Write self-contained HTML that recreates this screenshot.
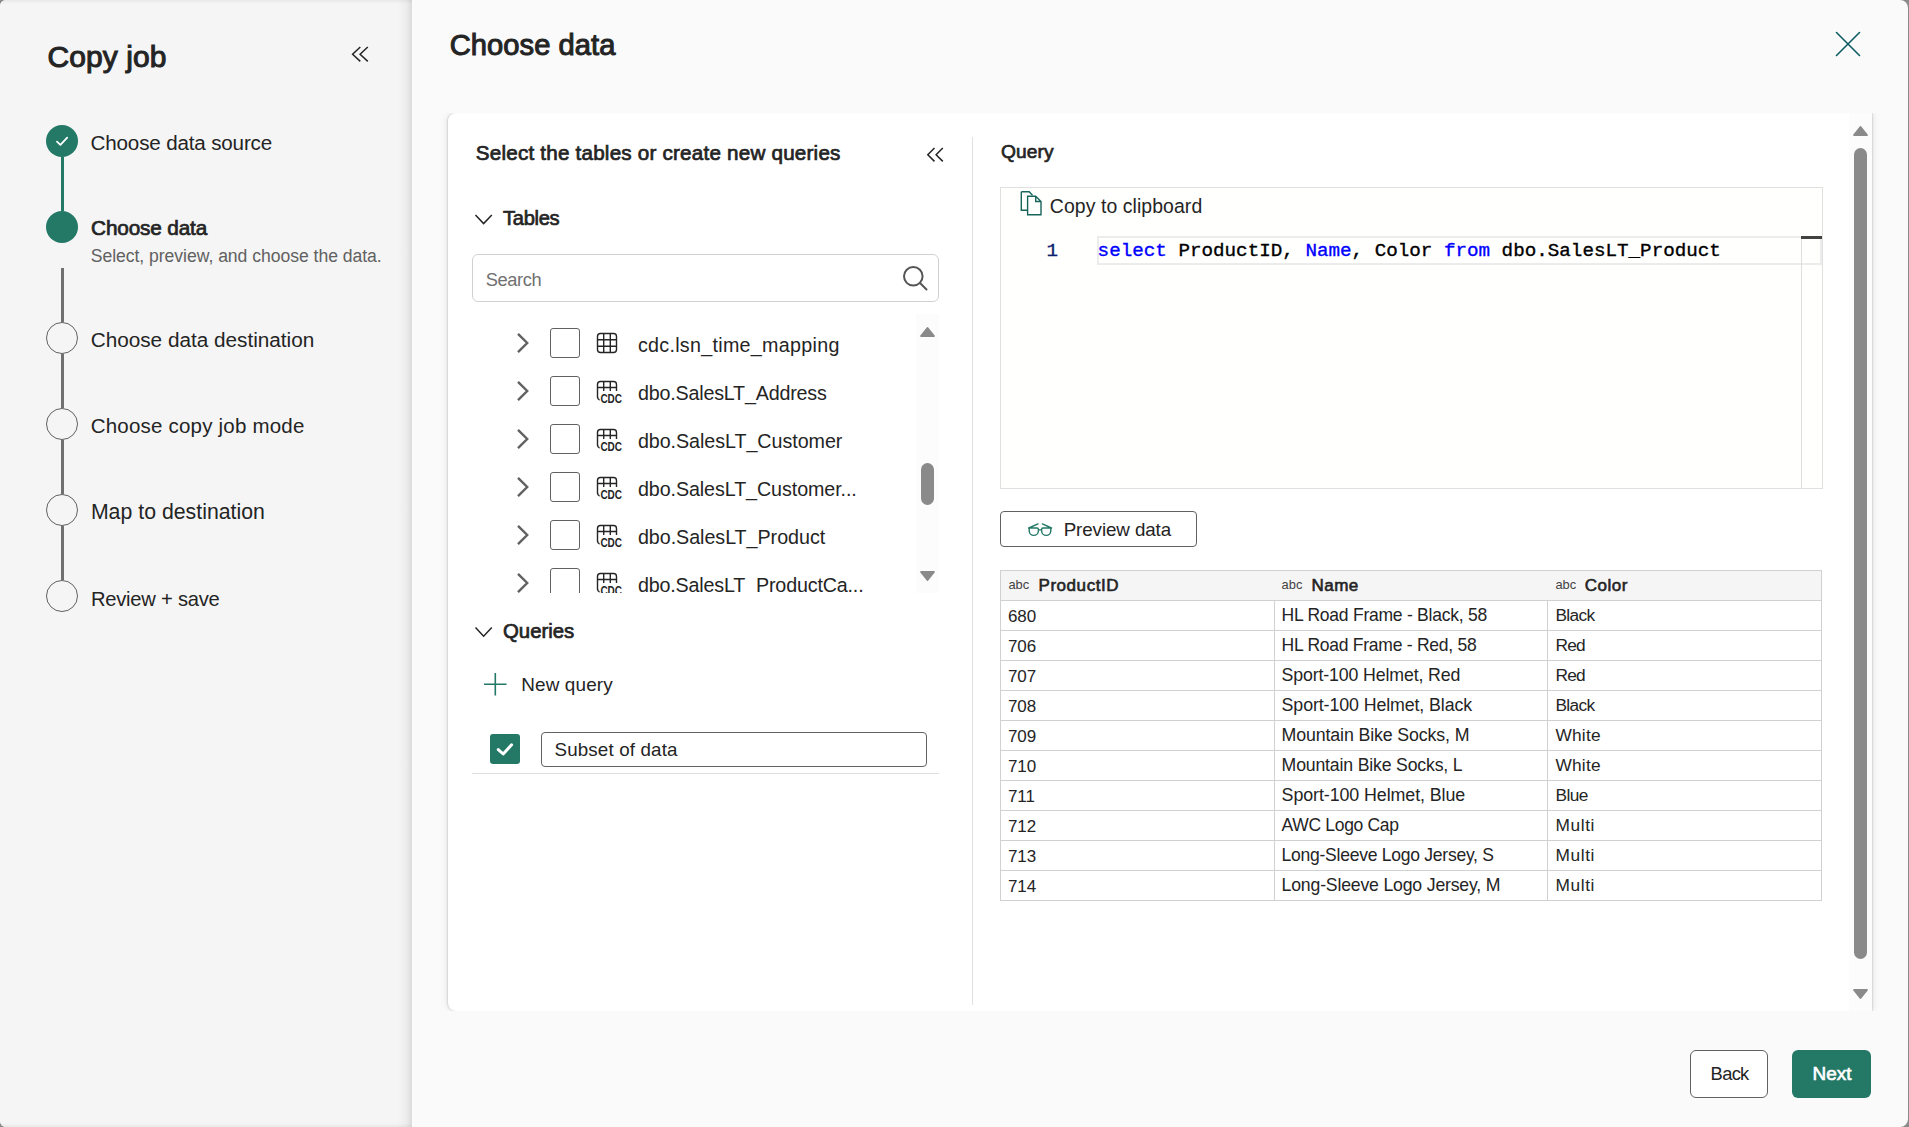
<!DOCTYPE html>
<html><head><meta charset="utf-8"><style>
html,body{margin:0;padding:0;width:1909px;height:1127px;overflow:hidden;background:#8a8a8a}
.t{position:absolute;white-space:nowrap;font-family:"Liberation Sans",sans-serif}
.m{position:absolute;white-space:pre;font-family:"Liberation Mono",monospace;-webkit-text-stroke:0.35px currentColor}
</style></head><body>
<div style="position:absolute;left:0;top:0;width:1908px;height:1127px;border-radius:6px 8px 8px 6px;overflow:hidden;background:#fafafa">
<div style="position:absolute;left:0px;top:0px;width:412px;height:1127px;background:#f5f5f5"></div>
<div style="position:absolute;left:398px;top:0px;width:14px;height:1127px;background:linear-gradient(to right,rgba(0,0,0,0),rgba(0,0,0,0.035) 60%,rgba(0,0,0,0.11))"></div>
<div style="position:absolute;left:412px;top:0px;width:1px;height:1127px;background:#fdfdfd"></div>
<div style="position:absolute;left:0px;top:0px;width:412px;height:4px;background:linear-gradient(to bottom,rgba(0,0,0,0.05),rgba(0,0,0,0))"></div>
<div style="position:absolute;left:0px;top:1123px;width:412px;height:4px;background:linear-gradient(to top,rgba(0,0,0,0.05),rgba(0,0,0,0))"></div>
<div class="t" style="left:47.62px;top:42.33px;font-size:29.97px;line-height:29.97px;letter-spacing:0.080px;color:#242424;-webkit-text-stroke:1.05px #242424;">Copy job</div>
<svg style="position:absolute;left:348px;top:44px" width="24" height="20" viewBox="0 0 24 20"><path d="M12.3 3 L4.6 10.2 L12.3 17.4 M19.8 3 L12.1 10.2 L19.8 17.4" fill="none" stroke="#242424" stroke-width="1.5"/></svg>
<div style="position:absolute;left:61px;top:157px;width:3px;height:54px;background:#247866"></div>
<div style="position:absolute;left:61px;top:268px;width:3px;height:54px;background:#707070"></div>
<div style="position:absolute;left:61px;top:354px;width:3px;height:54px;background:#707070"></div>
<div style="position:absolute;left:61px;top:440px;width:3px;height:54px;background:#707070"></div>
<div style="position:absolute;left:61px;top:526px;width:3px;height:54px;background:#707070"></div>
<div style="position:absolute;left:46px;top:125px;width:32px;height:32px;border-radius:50%;background:#247866"></div>
<svg style="position:absolute;left:46px;top:125px" width="32" height="32" viewBox="0 0 32 32"><path d="M11 16.6 L14.4 19.8 L21.2 12.6" fill="none" stroke="#fff" stroke-width="1.8" stroke-linecap="round" stroke-linejoin="round"/></svg>
<div style="position:absolute;left:46px;top:211px;width:32px;height:32px;border-radius:50%;background:#247866"></div>
<div style="position:absolute;left:46px;top:322px;width:32px;height:32px;box-sizing:border-box;border-radius:50%;border:1.2px solid #616161;background:#f5f5f5"></div>
<div style="position:absolute;left:46px;top:408px;width:32px;height:32px;box-sizing:border-box;border-radius:50%;border:1.2px solid #616161;background:#f5f5f5"></div>
<div style="position:absolute;left:46px;top:494px;width:32px;height:32px;box-sizing:border-box;border-radius:50%;border:1.2px solid #616161;background:#f5f5f5"></div>
<div style="position:absolute;left:46px;top:580px;width:32px;height:32px;box-sizing:border-box;border-radius:50%;border:1.2px solid #616161;background:#f5f5f5"></div>
<div class="t" style="left:90.50px;top:133.45px;font-size:20.62px;line-height:20.62px;letter-spacing:-0.161px;color:#242424;">Choose data source</div>
<div class="t" style="left:91.06px;top:217.65px;font-size:20.74px;line-height:20.74px;letter-spacing:-0.145px;color:#242424;-webkit-text-stroke:0.73px #242424;">Choose data</div>
<div class="t" style="left:90.70px;top:247.90px;font-size:17.60px;line-height:17.60px;letter-spacing:-0.039px;color:#616161;">Select, preview, and choose the data.</div>
<div class="t" style="left:90.70px;top:330.13px;font-size:20.76px;line-height:20.76px;letter-spacing:-0.009px;color:#242424;">Choose data destination</div>
<div class="t" style="left:90.70px;top:416.45px;font-size:20.50px;line-height:20.50px;letter-spacing:0.211px;color:#242424;">Choose copy job mode</div>
<div class="t" style="left:90.90px;top:502.19px;font-size:21.27px;line-height:21.27px;letter-spacing:0.016px;color:#242424;">Map to destination</div>
<div class="t" style="left:90.90px;top:588.64px;font-size:20.16px;line-height:20.16px;letter-spacing:-0.228px;color:#242424;">Review + save</div>
<div class="t" style="left:449.71px;top:31.12px;font-size:29.16px;line-height:29.16px;letter-spacing:0.041px;color:#242424;-webkit-text-stroke:1.02px #242424;">Choose data</div>
<svg style="position:absolute;left:1834px;top:30px" width="28" height="28" viewBox="0 0 28 28"><path d="M2.5 2.5 L25.5 25.5 M25.5 2.5 L2.5 25.5" fill="none" stroke="#0f5d64" stroke-width="1.6" stroke-linecap="round"/></svg>
<div style="position:absolute;left:448px;top:113px;width:1424px;height:898px;background:#fff;border-radius:8px 0 0 8px;box-shadow:-1px 0 1.5px rgba(0,0,0,0.10),-2px 0 7px rgba(0,0,0,0.06),1px 0 1.5px rgba(0,0,0,0.10),2px 0 7px rgba(0,0,0,0.06);clip-path:inset(0 -20px 0 -20px)"></div>
<div style="position:absolute;left:1849px;top:113px;width:23px;height:898px;background:#fcfcfc"></div>
<svg style="position:absolute;left:1852px;top:124px" width="17" height="14" viewBox="0 0 17 14"><path d="M8.5 3 L14.9 11 L2.1 11 Z" fill="#8a8a8a" stroke="#8a8a8a" stroke-width="2" stroke-linejoin="round"/></svg>
<div style="position:absolute;left:1854px;top:148px;width:13px;height:811px;border-radius:7px;background:#8a8a8a"></div>
<svg style="position:absolute;left:1852px;top:987px" width="17" height="14" viewBox="0 0 17 14"><path d="M2.1 3 L14.9 3 L8.5 11 Z" fill="#8a8a8a" stroke="#8a8a8a" stroke-width="2" stroke-linejoin="round"/></svg>
<div class="t" style="left:475.76px;top:143.42px;font-size:20.65px;line-height:20.65px;letter-spacing:0.206px;color:#242424;-webkit-text-stroke:0.72px #242424;">Select the tables or create new queries</div>
<svg style="position:absolute;left:924px;top:145px" width="22" height="20" viewBox="0 0 22 20"><path d="M10.5 3 L3.8 9.7 L10.5 16.4 M18.8 3 L12.1 9.7 L18.8 16.4" fill="none" stroke="#242424" stroke-width="1.5"/></svg>
<div style="position:absolute;left:972px;top:137px;width:1px;height:868px;background:#e0e0e0"></div>
<svg style="position:absolute;left:474px;top:211px" width="20" height="16" viewBox="0 0 20 16"><path d="M1.5 4 L9.6 12.6 L17.8 4" fill="none" stroke="#242424" stroke-width="1.5"/></svg>
<div class="t" style="left:503.05px;top:207.84px;font-size:20.15px;line-height:20.15px;letter-spacing:-0.331px;color:#242424;-webkit-text-stroke:0.71px #242424;">Tables</div>
<div style="position:absolute;left:472px;top:254px;width:467px;height:48px;box-sizing:border-box;border:1px solid #d1d1d1;border-radius:6px;background:#fff"></div>
<div class="t" style="left:485.80px;top:270.54px;font-size:18.26px;line-height:18.26px;letter-spacing:-0.391px;color:#707070;">Search</div>
<svg style="position:absolute;left:900px;top:263px" width="30" height="30" viewBox="0 0 30 30"><circle cx="13.3" cy="13.3" r="9.3" fill="none" stroke="#555" stroke-width="2"/><path d="M20 20 L26.5 26.5" stroke="#555" stroke-width="2" stroke-linecap="round"/></svg>
<div style="position:absolute;left:472px;top:314px;width:467px;height:279px;overflow:hidden">
<svg style="position:absolute;left:43px;top:17px" width="16" height="24" viewBox="0 0 16 24"><path d="M3 2.8 L12.2 12 L3 21.2" fill="none" stroke="#616161" stroke-width="2.4"/></svg>
<div style="position:absolute;left:78px;top:14px;width:30px;height:30px;box-sizing:border-box;border:1.3px solid #616161;border-radius:3px;background:#fff"></div>
<svg style="position:absolute;left:124px;top:18px" width="22" height="22" viewBox="0 0 22 22"><rect x="1.5" y="1.5" width="19" height="19" rx="3" fill="none" stroke="#242424" stroke-width="1.4"/><path d="M7.7 1.5 V20.5 M14.3 1.5 V20.5 M1.5 7.7 H20.5 M1.5 14.3 H20.5" stroke="#242424" stroke-width="1.4"/></svg>
<svg style="position:absolute;left:43px;top:65px" width="16" height="24" viewBox="0 0 16 24"><path d="M3 2.8 L12.2 12 L3 21.2" fill="none" stroke="#616161" stroke-width="2.4"/></svg>
<div style="position:absolute;left:78px;top:62px;width:30px;height:30px;box-sizing:border-box;border:1.3px solid #616161;border-radius:3px;background:#fff"></div>
<svg style="position:absolute;left:124px;top:66px" width="28" height="24" viewBox="0 0 28 24"><path d="M1.5 17.5 V4.5 Q1.5 1.5 4.5 1.5 H17.5 Q20.5 1.5 20.5 4.5 V11" fill="none" stroke="#242424" stroke-width="1.4"/><path d="M1.5 7.5 H20.5 M7.7 1.5 V11 M14.3 1.5 V11" stroke="#242424" stroke-width="1.4"/><path d="M1.5 17 Q1.6 19.5 3.6 20" fill="none" stroke="#242424" stroke-width="1.4"/><text x="4.4" y="22.7" font-family="Liberation Sans" font-weight="700" font-size="12.3" fill="#242424" textLength="21.6" lengthAdjust="spacingAndGlyphs">CDC</text></svg>
<svg style="position:absolute;left:43px;top:113px" width="16" height="24" viewBox="0 0 16 24"><path d="M3 2.8 L12.2 12 L3 21.2" fill="none" stroke="#616161" stroke-width="2.4"/></svg>
<div style="position:absolute;left:78px;top:110px;width:30px;height:30px;box-sizing:border-box;border:1.3px solid #616161;border-radius:3px;background:#fff"></div>
<svg style="position:absolute;left:124px;top:114px" width="28" height="24" viewBox="0 0 28 24"><path d="M1.5 17.5 V4.5 Q1.5 1.5 4.5 1.5 H17.5 Q20.5 1.5 20.5 4.5 V11" fill="none" stroke="#242424" stroke-width="1.4"/><path d="M1.5 7.5 H20.5 M7.7 1.5 V11 M14.3 1.5 V11" stroke="#242424" stroke-width="1.4"/><path d="M1.5 17 Q1.6 19.5 3.6 20" fill="none" stroke="#242424" stroke-width="1.4"/><text x="4.4" y="22.7" font-family="Liberation Sans" font-weight="700" font-size="12.3" fill="#242424" textLength="21.6" lengthAdjust="spacingAndGlyphs">CDC</text></svg>
<svg style="position:absolute;left:43px;top:161px" width="16" height="24" viewBox="0 0 16 24"><path d="M3 2.8 L12.2 12 L3 21.2" fill="none" stroke="#616161" stroke-width="2.4"/></svg>
<div style="position:absolute;left:78px;top:158px;width:30px;height:30px;box-sizing:border-box;border:1.3px solid #616161;border-radius:3px;background:#fff"></div>
<svg style="position:absolute;left:124px;top:162px" width="28" height="24" viewBox="0 0 28 24"><path d="M1.5 17.5 V4.5 Q1.5 1.5 4.5 1.5 H17.5 Q20.5 1.5 20.5 4.5 V11" fill="none" stroke="#242424" stroke-width="1.4"/><path d="M1.5 7.5 H20.5 M7.7 1.5 V11 M14.3 1.5 V11" stroke="#242424" stroke-width="1.4"/><path d="M1.5 17 Q1.6 19.5 3.6 20" fill="none" stroke="#242424" stroke-width="1.4"/><text x="4.4" y="22.7" font-family="Liberation Sans" font-weight="700" font-size="12.3" fill="#242424" textLength="21.6" lengthAdjust="spacingAndGlyphs">CDC</text></svg>
<svg style="position:absolute;left:43px;top:209px" width="16" height="24" viewBox="0 0 16 24"><path d="M3 2.8 L12.2 12 L3 21.2" fill="none" stroke="#616161" stroke-width="2.4"/></svg>
<div style="position:absolute;left:78px;top:206px;width:30px;height:30px;box-sizing:border-box;border:1.3px solid #616161;border-radius:3px;background:#fff"></div>
<svg style="position:absolute;left:124px;top:210px" width="28" height="24" viewBox="0 0 28 24"><path d="M1.5 17.5 V4.5 Q1.5 1.5 4.5 1.5 H17.5 Q20.5 1.5 20.5 4.5 V11" fill="none" stroke="#242424" stroke-width="1.4"/><path d="M1.5 7.5 H20.5 M7.7 1.5 V11 M14.3 1.5 V11" stroke="#242424" stroke-width="1.4"/><path d="M1.5 17 Q1.6 19.5 3.6 20" fill="none" stroke="#242424" stroke-width="1.4"/><text x="4.4" y="22.7" font-family="Liberation Sans" font-weight="700" font-size="12.3" fill="#242424" textLength="21.6" lengthAdjust="spacingAndGlyphs">CDC</text></svg>
<svg style="position:absolute;left:43px;top:257px" width="16" height="24" viewBox="0 0 16 24"><path d="M3 2.8 L12.2 12 L3 21.2" fill="none" stroke="#616161" stroke-width="2.4"/></svg>
<div style="position:absolute;left:78px;top:254px;width:30px;height:30px;box-sizing:border-box;border:1.3px solid #616161;border-radius:3px;background:#fff"></div>
<svg style="position:absolute;left:124px;top:258px" width="28" height="24" viewBox="0 0 28 24"><path d="M1.5 17.5 V4.5 Q1.5 1.5 4.5 1.5 H17.5 Q20.5 1.5 20.5 4.5 V11" fill="none" stroke="#242424" stroke-width="1.4"/><path d="M1.5 7.5 H20.5 M7.7 1.5 V11 M14.3 1.5 V11" stroke="#242424" stroke-width="1.4"/><path d="M1.5 17 Q1.6 19.5 3.6 20" fill="none" stroke="#242424" stroke-width="1.4"/><text x="4.4" y="22.7" font-family="Liberation Sans" font-weight="700" font-size="12.3" fill="#242424" textLength="21.6" lengthAdjust="spacingAndGlyphs">CDC</text></svg>
</div>
<div style="position:absolute;left:0;top:314px;width:916px;height:279px;overflow:hidden">
<div class="t" style="left:637.90px;top:21.52px;font-size:19.70px;line-height:19.70px;letter-spacing:0.294px;color:#242424;">cdc.lsn_time_mapping</div>
<div class="t" style="left:637.90px;top:69.52px;font-size:19.70px;line-height:19.70px;letter-spacing:-0.182px;color:#242424;">dbo.SalesLT_Address</div>
<div class="t" style="left:637.90px;top:117.52px;font-size:19.70px;line-height:19.70px;letter-spacing:-0.047px;color:#242424;">dbo.SalesLT_Customer</div>
<div class="t" style="left:637.90px;top:165.52px;font-size:19.70px;line-height:19.70px;letter-spacing:-0.079px;color:#242424;">dbo.SalesLT_Customer...</div>
<div class="t" style="left:637.90px;top:213.52px;font-size:19.70px;line-height:19.70px;letter-spacing:-0.033px;color:#242424;">dbo.SalesLT_Product</div>
<div class="t" style="left:637.90px;top:261.52px;font-size:19.70px;line-height:19.70px;letter-spacing:-0.161px;color:#242424;">dbo.SalesLT_ProductCa...</div>
</div>
<div style="position:absolute;left:916px;top:314px;width:23px;height:279px;background:#fcfcfc"></div>
<svg style="position:absolute;left:919px;top:325px" width="17" height="14" viewBox="0 0 17 14"><path d="M8.5 3 L14.9 11 L2.1 11 Z" fill="#8a8a8a" stroke="#8a8a8a" stroke-width="2" stroke-linejoin="round"/></svg>
<div style="position:absolute;left:921px;top:463px;width:13px;height:42px;border-radius:7px;background:#8a8a8a"></div>
<svg style="position:absolute;left:919px;top:569px" width="17" height="14" viewBox="0 0 17 14"><path d="M2.1 3 L14.9 3 L8.5 11 Z" fill="#8a8a8a" stroke="#8a8a8a" stroke-width="2" stroke-linejoin="round"/></svg>
<svg style="position:absolute;left:474px;top:624px" width="20" height="16" viewBox="0 0 20 16"><path d="M1.5 3.6 L9.6 12.2 L17.8 3.6" fill="none" stroke="#242424" stroke-width="1.5"/></svg>
<div class="t" style="left:503.06px;top:620.58px;font-size:20.35px;line-height:20.35px;letter-spacing:-0.007px;color:#242424;-webkit-text-stroke:0.71px #242424;">Queries</div>
<svg style="position:absolute;left:482px;top:671px" width="26" height="26" viewBox="0 0 26 26"><path d="M13.3 2 V24.5 M2 13.3 H24.5" stroke="#247866" stroke-width="1.6"/></svg>
<div class="t" style="left:521.30px;top:675.79px;font-size:18.91px;line-height:18.91px;letter-spacing:0.123px;color:#242424;">New query</div>
<div style="position:absolute;left:490px;top:734px;width:30px;height:30px;border-radius:3px;background:#247866"></div>
<svg style="position:absolute;left:490px;top:734px" width="30" height="30" viewBox="0 0 30 30"><path d="M8.3 15.6 L13.2 20 L21.6 10.8" fill="none" stroke="#fff" stroke-width="3" stroke-linecap="round" stroke-linejoin="round"/></svg>
<div style="position:absolute;left:541px;top:732px;width:386px;height:35px;box-sizing:border-box;border:1.3px solid #616161;border-radius:4px;background:#fff"></div>
<div class="t" style="left:554.50px;top:740.81px;font-size:18.77px;line-height:18.77px;letter-spacing:0.150px;color:#242424;">Subset of data</div>
<div style="position:absolute;left:472px;top:773px;width:467px;height:1px;background:#e0e0e0"></div>
<div class="t" style="left:1001.04px;top:141.54px;font-size:19.21px;line-height:19.21px;letter-spacing:0.106px;color:#242424;-webkit-text-stroke:0.67px #242424;">Query</div>
<div style="position:absolute;left:1000px;top:187px;width:823px;height:302px;box-sizing:border-box;border:1px solid #e0e0e0;background:#fffffd"></div>
<svg style="position:absolute;left:1018px;top:189px" width="26" height="28" viewBox="0 0 26 28"><path d="M3.3 2.8 H11.2 L14.5 6.2 M3.3 2.8 V21.3 H9.6" fill="none" stroke="#17645a" stroke-width="1.4"/><path d="M9.6 7.2 H17.7 L23 12.5 V25.8 H9.6 Z M17.7 7.2 V12.5 H23" fill="none" stroke="#17645a" stroke-width="1.4" stroke-linejoin="miter"/></svg>
<div class="t" style="left:1049.80px;top:196.55px;font-size:19.43px;line-height:19.43px;letter-spacing:0.080px;color:#242424;">Copy to clipboard</div>
<div style="position:absolute;left:1097px;top:236px;width:725px;height:29px;box-sizing:border-box;border:2px solid #ececec"></div>
<div style="position:absolute;left:1801px;top:236px;width:1px;height:252px;background:#dedede"></div>
<div style="position:absolute;left:1801px;top:236px;width:21px;height:3px;background:#424242"></div>
<div class="m" style="left:1046.5px;top:241.81px;font-size:19.24px;line-height:19.24px;color:#0b216f">1</div>
<div class="m" style="left:1097.6px;top:241.81px;font-size:19.24px;line-height:19.24px;color:#000"><span style="color:#0000ff">select</span> ProductID, <span style="color:#0000ff">Name</span>, Color <span style="color:#0000ff">from</span> dbo.SalesLT_Product</div>
<div style="position:absolute;left:1000px;top:511px;width:197px;height:36px;box-sizing:border-box;border:1px solid #616161;border-radius:4px;background:#fff"></div>
<svg style="position:absolute;left:1026px;top:520px" width="28" height="20" viewBox="0 0 28 20"><path d="M2.6 8 H11 Q12.4 8 12.4 9.6 V10.8 A4.6 4.6 0 0 1 3.2 10.8 V8 M25.6 8 H17 Q15.6 8 15.6 9.6 V10.8 A4.6 4.6 0 0 0 24.8 10.8 V8 M12.4 9.9 H15.6 M2.8 8 L12 3.9 M25.4 8 L16.4 3.9" fill="none" stroke="#247866" stroke-width="1.4" stroke-linecap="round" stroke-linejoin="round"/></svg>
<div class="t" style="left:1063.70px;top:521.10px;font-size:18.78px;line-height:18.78px;letter-spacing:-0.091px;color:#242424;">Preview data</div>
<div style="position:absolute;left:1000px;top:570px;width:822px;height:31px;background:#f5f5f5"></div>
<div style="position:absolute;left:1000px;top:570px;width:822px;height:331px;box-sizing:border-box;border:1px solid #d1d1d1"></div>
<div style="position:absolute;left:1000px;top:600px;width:822px;height:1px;background:#d1d1d1"></div>
<div style="position:absolute;left:1000px;top:630px;width:822px;height:1px;background:#d1d1d1"></div>
<div style="position:absolute;left:1000px;top:660px;width:822px;height:1px;background:#d1d1d1"></div>
<div style="position:absolute;left:1000px;top:690px;width:822px;height:1px;background:#d1d1d1"></div>
<div style="position:absolute;left:1000px;top:720px;width:822px;height:1px;background:#d1d1d1"></div>
<div style="position:absolute;left:1000px;top:750px;width:822px;height:1px;background:#d1d1d1"></div>
<div style="position:absolute;left:1000px;top:780px;width:822px;height:1px;background:#d1d1d1"></div>
<div style="position:absolute;left:1000px;top:810px;width:822px;height:1px;background:#d1d1d1"></div>
<div style="position:absolute;left:1000px;top:840px;width:822px;height:1px;background:#d1d1d1"></div>
<div style="position:absolute;left:1000px;top:870px;width:822px;height:1px;background:#d1d1d1"></div>
<div style="position:absolute;left:1274px;top:600px;width:1px;height:300px;background:#d1d1d1"></div>
<div style="position:absolute;left:1547px;top:600px;width:1px;height:300px;background:#d1d1d1"></div>
<div class="t" style="left:1008.40px;top:578.68px;font-size:12.90px;line-height:12.90px;letter-spacing:0.053px;color:#424242;">abc</div>
<div class="t" style="left:1038.50px;top:577.11px;font-size:17.00px;line-height:17.00px;letter-spacing:0.553px;color:#242424;-webkit-text-stroke:0.60px #242424;">ProductID</div>
<div class="t" style="left:1281.60px;top:578.68px;font-size:12.90px;line-height:12.90px;letter-spacing:0.053px;color:#424242;">abc</div>
<div class="t" style="left:1311.60px;top:577.11px;font-size:17.00px;line-height:17.00px;letter-spacing:0.416px;color:#242424;-webkit-text-stroke:0.60px #242424;">Name</div>
<div class="t" style="left:1555.40px;top:578.68px;font-size:12.90px;line-height:12.90px;letter-spacing:0.053px;color:#424242;">abc</div>
<div class="t" style="left:1584.70px;top:577.11px;font-size:17.00px;line-height:17.00px;letter-spacing:0.519px;color:#242424;-webkit-text-stroke:0.60px #242424;">Color</div>
<div class="t" style="left:1007.90px;top:607.61px;font-size:17.00px;line-height:17.00px;letter-spacing:0.000px;color:#242424;">680</div>
<div class="t" style="left:1281.60px;top:607.16px;font-size:17.53px;line-height:17.53px;letter-spacing:-0.250px;color:#242424;">HL Road Frame - Black, 58</div>
<div class="t" style="left:1555.40px;top:607.36px;font-size:17.30px;line-height:17.30px;letter-spacing:-0.608px;color:#242424;">Black</div>
<div class="t" style="left:1007.90px;top:637.61px;font-size:17.00px;line-height:17.00px;letter-spacing:0.000px;color:#242424;">706</div>
<div class="t" style="left:1281.60px;top:637.17px;font-size:17.52px;line-height:17.52px;letter-spacing:-0.263px;color:#242424;">HL Road Frame - Red, 58</div>
<div class="t" style="left:1555.40px;top:637.36px;font-size:17.30px;line-height:17.30px;letter-spacing:-0.700px;color:#242424;">Red</div>
<div class="t" style="left:1007.90px;top:667.61px;font-size:17.00px;line-height:17.00px;letter-spacing:0.000px;color:#242424;">707</div>
<div class="t" style="left:1281.60px;top:666.98px;font-size:17.75px;line-height:17.75px;letter-spacing:-0.141px;color:#242424;">Sport-100 Helmet, Red</div>
<div class="t" style="left:1555.40px;top:667.36px;font-size:17.30px;line-height:17.30px;letter-spacing:-0.700px;color:#242424;">Red</div>
<div class="t" style="left:1007.90px;top:697.61px;font-size:17.00px;line-height:17.00px;letter-spacing:0.000px;color:#242424;">708</div>
<div class="t" style="left:1281.60px;top:696.93px;font-size:17.81px;line-height:17.81px;letter-spacing:-0.106px;color:#242424;">Sport-100 Helmet, Black</div>
<div class="t" style="left:1555.40px;top:697.36px;font-size:17.30px;line-height:17.30px;letter-spacing:-0.608px;color:#242424;">Black</div>
<div class="t" style="left:1007.90px;top:727.61px;font-size:17.00px;line-height:17.00px;letter-spacing:0.000px;color:#242424;">709</div>
<div class="t" style="left:1281.60px;top:726.95px;font-size:17.77px;line-height:17.77px;letter-spacing:-0.127px;color:#242424;">Mountain Bike Socks, M</div>
<div class="t" style="left:1555.40px;top:727.36px;font-size:17.30px;line-height:17.30px;letter-spacing:0.245px;color:#242424;">White</div>
<div class="t" style="left:1007.90px;top:757.61px;font-size:17.00px;line-height:17.00px;letter-spacing:0.000px;color:#242424;">710</div>
<div class="t" style="left:1281.60px;top:757.04px;font-size:17.68px;line-height:17.68px;letter-spacing:-0.172px;color:#242424;">Mountain Bike Socks, L</div>
<div class="t" style="left:1555.40px;top:757.36px;font-size:17.30px;line-height:17.30px;letter-spacing:0.245px;color:#242424;">White</div>
<div class="t" style="left:1007.90px;top:787.61px;font-size:17.00px;line-height:17.00px;letter-spacing:0.000px;color:#242424;">711</div>
<div class="t" style="left:1281.60px;top:786.89px;font-size:17.85px;line-height:17.85px;letter-spacing:-0.087px;color:#242424;">Sport-100 Helmet, Blue</div>
<div class="t" style="left:1555.40px;top:787.36px;font-size:17.30px;line-height:17.30px;letter-spacing:-0.539px;color:#242424;">Blue</div>
<div class="t" style="left:1007.90px;top:817.61px;font-size:17.00px;line-height:17.00px;letter-spacing:0.000px;color:#242424;">712</div>
<div class="t" style="left:1281.60px;top:817.18px;font-size:17.51px;line-height:17.51px;letter-spacing:-0.325px;color:#242424;">AWC Logo Cap</div>
<div class="t" style="left:1555.40px;top:817.36px;font-size:17.30px;line-height:17.30px;letter-spacing:0.645px;color:#242424;">Multi</div>
<div class="t" style="left:1007.90px;top:847.61px;font-size:17.00px;line-height:17.00px;letter-spacing:0.000px;color:#242424;">713</div>
<div class="t" style="left:1281.60px;top:847.17px;font-size:17.52px;line-height:17.52px;letter-spacing:-0.254px;color:#242424;">Long-Sleeve Logo Jersey, S</div>
<div class="t" style="left:1555.40px;top:847.36px;font-size:17.30px;line-height:17.30px;letter-spacing:0.645px;color:#242424;">Multi</div>
<div class="t" style="left:1007.90px;top:877.61px;font-size:17.00px;line-height:17.00px;letter-spacing:0.000px;color:#242424;">714</div>
<div class="t" style="left:1281.60px;top:877.05px;font-size:17.66px;line-height:17.66px;letter-spacing:-0.182px;color:#242424;">Long-Sleeve Logo Jersey, M</div>
<div class="t" style="left:1555.40px;top:877.36px;font-size:17.30px;line-height:17.30px;letter-spacing:0.645px;color:#242424;">Multi</div>
<div style="position:absolute;left:1690px;top:1050px;width:78px;height:48px;box-sizing:border-box;border:1px solid #616161;border-radius:6px;background:#fff"></div>
<div class="t" style="left:1710.60px;top:1065.07px;font-size:18.35px;line-height:18.35px;letter-spacing:-0.700px;color:#242424;">Back</div>
<div style="position:absolute;left:1792px;top:1050px;width:79px;height:48px;border-radius:6px;background:#247866"></div>
<div class="t" style="left:1812.53px;top:1064.57px;font-size:18.93px;line-height:18.93px;letter-spacing:0.004px;color:#fff;-webkit-text-stroke:0.66px #fff;">Next</div>
</div>
</body></html>
